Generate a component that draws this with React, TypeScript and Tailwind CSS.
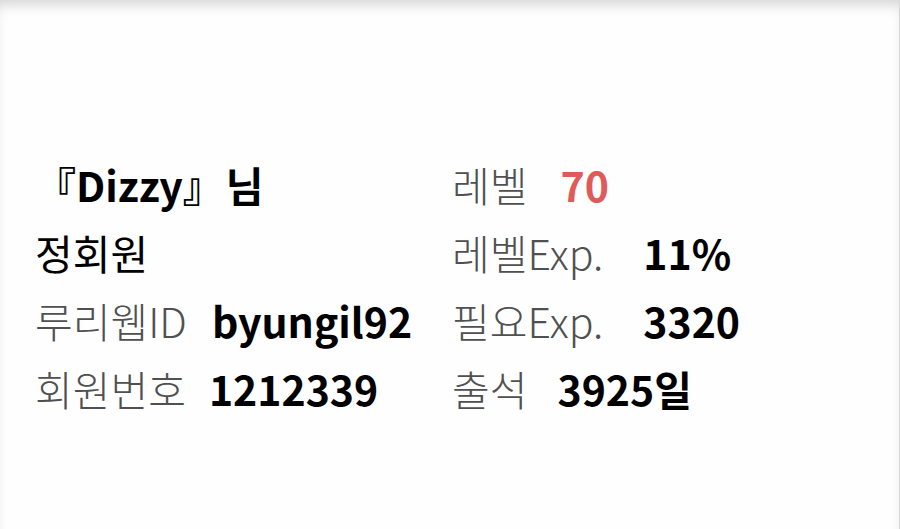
import React from "react";

const font = { fontFamily: '"Noto Sans CJK KR", "Noto Sans", sans-serif' };

const left = [
  { kind: "name" },
  { kind: "grade" },
  { label: "루리웹ID", value: "byungil92", gap: "ml-[25px]" },
  { label: "회원번호", value: "1212339", gap: "ml-[23px]" },
];

const right = [
  { label: "레벨", value: "70", gap: "ml-[33px]", red: true },
  { label: "레벨Exp.", value: "11%", gap: "ml-[40px]" },
  { label: "필요Exp.", value: "3320", gap: "ml-[40px]" },
  { label: "출석", value: "3925일", gap: "ml-[30px]" },
];

function Row({ label, value, gap, red }: { label: string; value: string; gap: string; red?: boolean }) {
  return (
    <div className="flex h-[68px] items-center whitespace-nowrap">
      <span className="font-light text-[#505050]">{label}</span>
      <span className={`${gap} font-bold ${red ? "text-[#e05a5a]" : "text-black"}`}>{value}</span>
    </div>
  );
}

export default function App() {
  return (
    <div
      className="relative h-[529px] w-[900px] overflow-hidden border-r border-[#d8d8d8] bg-[#fefefe] shadow-[inset_0_10px_14px_-6px_rgba(0,0,0,0.18)]"
      style={font}
    >
      <div className="grid grid-cols-[417px_1fr] pl-[35px] pt-[150px] text-[41px] leading-none">
        <div className="flex flex-col">
          {left.map((r, i) =>
            r.kind === "name" ? (
              <div key={i} className="flex h-[68px] items-center whitespace-nowrap font-bold text-black">
                <span>『Dizzy』</span>
                <span className="ml-[2px]">님</span>
              </div>
            ) : r.kind === "grade" ? (
              <div key={i} className="flex h-[68px] items-center text-black">
                정회원
              </div>
            ) : (
              <Row key={i} label={r.label!} value={r.value!} gap={r.gap!} />
            )
          )}
        </div>
        <div className="flex flex-col">
          {right.map((r, i) => (
            <Row key={i} label={r.label} value={r.value} gap={r.gap} red={r.red} />
          ))}
        </div>
      </div>
    </div>
  );
}
